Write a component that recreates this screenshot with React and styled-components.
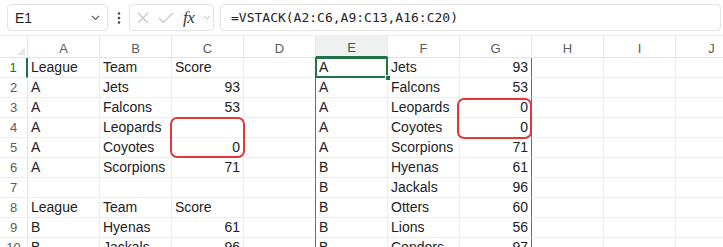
import React from "react";
import styled, { createGlobalStyle, css } from "styled-components";

const GlobalStyle = createGlobalStyle`
  body {
    margin: 0;
    background: #ffffff;
    font-family: "Liberation Sans", Arial, sans-serif;
    overflow: hidden;
  }
`;

const COLS = ["A", "B", "C", "D", "E", "F", "G", "H", "I", "J"];

const rows = [
  { A: "League", B: "Team", C: "Score", E: "A", F: "Jets", G: 93 },
  { A: "A", B: "Jets", C: 93, E: "A", F: "Falcons", G: 53 },
  { A: "A", B: "Falcons", C: 53, E: "A", F: "Leopards", G: 0 },
  { A: "A", B: "Leopards", E: "A", F: "Coyotes", G: 0 },
  { A: "A", B: "Coyotes", C: 0, E: "A", F: "Scorpions", G: 71 },
  { A: "A", B: "Scorpions", C: 71, E: "B", F: "Hyenas", G: 61 },
  { E: "B", F: "Jackals", G: 96 },
  { A: "League", B: "Team", C: "Score", E: "B", F: "Otters", G: 60 },
  { A: "B", B: "Hyenas", C: 61, E: "B", F: "Lions", G: 56 },
  { A: "B", B: "Jackals", C: 96, E: "B", F: "Condors", G: 97 },
];

const Page = styled.div`
  width: 723px;
  height: 247px;
  overflow: hidden;
`;

const FormulaBar = styled.div`
  display: flex;
  align-items: center;
  height: 36px;
  padding: 0 2px 0 7px;
  box-sizing: border-box;
  border-bottom: 1px solid #ededed;
`;

const Box = styled.div`
  display: flex;
  align-items: center;
  height: 27px;
  box-sizing: border-box;
  border: 1px solid #e3e3e3;
  border-radius: 4px;
  background: #fff;
`;

const NameBox = styled(Box)`
  width: 101px;
  padding: 0 7px;
  justify-content: space-between;
  font-size: 14px;
  color: #242424;
`;

const Dots = styled.div`
  width: 21px;
  display: flex;
  justify-content: center;
`;

const Buttons = styled(Box)`
  width: 85px;
  padding: 0 0 0 7px;
  gap: 9px;
`;

const Fx = styled.span`
  font-family: "Liberation Serif", serif;
  font-style: italic;
  font-size: 17px;
  color: #3a3a3a;
  margin-left: 0px;
  letter-spacing: -0.5px;
`;

const FormulaInput = styled(Box)`
  flex: 1;
  margin-left: 6px;
  padding-left: 10px;
  font-family: "DejaVu Sans Mono", "Liberation Mono", monospace;
  font-size: 13px;
  color: #242424;
`;

const Sheet = styled.div`
  position: relative;
  display: grid;
  grid-template-columns: 28px repeat(10, 72px);
  grid-template-rows: 22px;
  grid-auto-rows: 20px;
`;

const Corner = styled.div`
  position: relative;
  border-right: 1px solid #e4e4e4;
  border-bottom: 1px solid #e4e4e4;
  &::after {
    content: "";
    position: absolute;
    right: 2px;
    bottom: 2px;
    border-left: 8px solid transparent;
    border-bottom: 8px solid #e6e6e6;
  }
`;

const ColHead = styled.div`
  display: flex;
  justify-content: center;
  align-items: center;
  padding-top: 3px;
  box-sizing: border-box;
  font-size: 13px;
  color: #5c5c5c;
  border-right: 1px solid #e8e8e8;
  border-bottom: 1px solid #e4e4e4;
  ${(p) =>
    p.$active &&
    css`
      background: #eef1ef;
      color: #1d6b3e;
      border-bottom: 2px solid #217346;
    `}
`;

const RowHead = styled.div`
  display: flex;
  justify-content: center;
  align-items: center;
  font-size: 13px;
  color: #5c5c5c;
  box-sizing: border-box;
  border-right: 1px solid #e4e4e4;
  border-bottom: 1px solid #efefef;
  ${(p) =>
    p.$active &&
    css`
      color: #1d6b3e;
      border-right: 2px solid #217346;
    `}
`;

const Cell = styled.div`
  position: relative;
  box-sizing: border-box;
  padding: 0 3px;
  line-height: 19px;
  font-size: 14px;
  color: #222;
  white-space: nowrap;
  overflow: visible;
  text-align: ${(p) => (p.$num ? "right" : "left")};
  border-right: 1px solid ${(p) => (p.$spillRight ? "#4f6fb3" : "#ececec")};
  border-bottom: 1px solid #efefef;
  ${(p) =>
    p.$spillLeft &&
    css`
      box-shadow: -1px 0 0 #4f6fb3;
    `}
  ${(p) =>
    p.$selected &&
    css`
      &::after {
        content: "";
        position: absolute;
        top: -1px;
        left: -1px;
        right: -1px;
        bottom: -1px;
        border: 2px solid #217346;
        z-index: 2;
      }
      &::before {
        content: "";
        position: absolute;
        right: -4px;
        bottom: -4px;
        width: 6px;
        height: 6px;
        background: #217346;
        border: 1px solid #fff;
        box-sizing: border-box;
        z-index: 3;
      }
    `}
`;

const Callout = styled.div`
  position: absolute;
  border: 2px solid #e2373d;
  border-radius: 7px;
  box-sizing: border-box;
  z-index: 4;
`;

const Chevron = ({ size = 9, color = "#555" }) => (
  <svg width={size} height={size * 0.6} viewBox="0 0 10 6">
    <path d="M1 1l4 4 4-4" fill="none" stroke={color} strokeWidth="1.2" />
  </svg>
);

const App = () => {
  return (
    <Page>
      <GlobalStyle />
      <FormulaBar>
        <NameBox>
          <span>E1</span>
          <Chevron />
        </NameBox>
        <Dots>
          <svg width="4" height="12" viewBox="0 0 4 12">
            <circle cx="2" cy="1.5" r="1.3" fill="#444" />
            <circle cx="2" cy="6" r="1.3" fill="#444" />
            <circle cx="2" cy="10.5" r="1.3" fill="#444" />
          </svg>
        </Dots>
        <Buttons>
          <svg width="12" height="12" viewBox="0 0 12 12">
            <path d="M1 1l10 10M11 1L1 11" stroke="#c6c6c6" strokeWidth="1.1" />
          </svg>
          <svg width="16" height="12" viewBox="0 0 16 12">
            <path d="M1 6l4.5 4.5L15 1" fill="none" stroke="#c6c6c6" strokeWidth="1.1" />
          </svg>
          <Fx>fx</Fx>
          <Chevron size={8} color="#b5b5b5" />
        </Buttons>
        <FormulaInput>=VSTACK(A2:C6,A9:C13,A16:C20)</FormulaInput>
      </FormulaBar>
      <Sheet>
        <Corner />
        {COLS.map((c) => (
          <ColHead key={c} $active={c === "E"}>
            {c}
          </ColHead>
        ))}
        {rows.map((row, i) => (
          <React.Fragment key={i}>
            <RowHead $active={i === 0}>{i + 1}</RowHead>
            {COLS.map((c) => {
              const v = row[c];
              return (
                <Cell
                  key={c}
                  $num={typeof v === "number"}
                  $spillLeft={c === "E"}
                  $spillRight={c === "G"}
                  $selected={i === 0 && c === "E"}
                >
                  {v}
                </Cell>
              );
            })}
          </React.Fragment>
        ))}
        <Callout style={{ left: 170, top: 81, width: 75, height: 41 }} />
        <Callout style={{ left: 457, top: 62, width: 75, height: 41 }} />
      </Sheet>
    </Page>
  );
};

export default App;
